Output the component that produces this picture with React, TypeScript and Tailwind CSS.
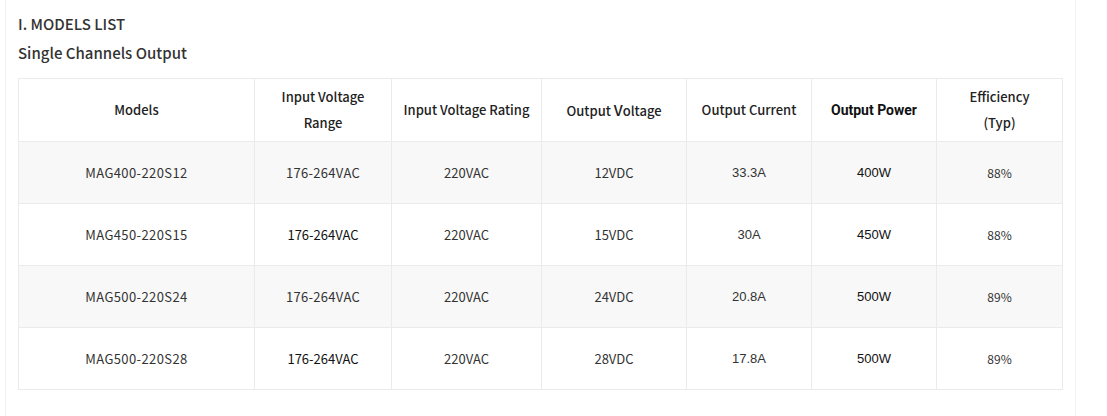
import React from "react";

const rows = [
  { m: "MAG400-220S12", r: "176-264VAC", rb: false, v: "12VDC", c: "33.3A", p: "400W", e: "88%" },
  { m: "MAG450-220S15", r: "176-264VAC", rb: true, v: "15VDC", c: "30A", p: "450W", e: "88%" },
  { m: "MAG500-220S24", r: "176-264VAC", rb: false, v: "24VDC", c: "20.8A", p: "500W", e: "89%" },
  { m: "MAG500-220S28", r: "176-264VAC", rb: true, v: "28VDC", c: "17.8A", p: "500W", e: "89%" },
];

export default function App() {
  const td = "border border-[#ebebeb] text-center align-middle h-[62px] p-0";
  const th = "border border-[#ebebeb] text-center align-middle h-[63px] p-0 font-medium text-[13px] leading-[26px] text-[#222]";
  return (
    <div className="w-[1107px] h-[416px] bg-white" style={{ fontFamily: '"Noto Sans CJK SC", "Noto Sans", sans-serif' }}>
      <div className="ml-[5px] w-[1071px] h-[416px] border-x border-[#f2f2f2] pl-[12px] pt-[11px]">
        <div className="text-[15px] leading-[26px] text-[#333] font-medium">I. MODELS LIST</div>
        <div className="text-[15px] leading-[26px] text-[#333] font-medium mt-[3px]">Single Channels Output</div>
        <table className="border-collapse mt-[12px] table-fixed w-[1045px]">
          <colgroup>
            <col className="w-[236px]" />
            <col className="w-[137px]" />
            <col className="w-[150px]" />
            <col className="w-[145px]" />
            <col className="w-[125px]" />
            <col className="w-[125px]" />
            <col className="w-[126px]" />
          </colgroup>
          <thead>
            <tr>
              <th className={th}>Models</th>
              <th className={th}>Input Voltage<br />Range</th>
              <th className={th}>Input Voltage Rating</th>
              <th className={th}>Output <span className="text-[15px]">V</span>oltage</th>
              <th className={th}>Output Current</th>
              <th className={th + " !font-bold !text-[14px] !text-[#111]"} style={{ fontFamily: '"Roboto", "Liberation Sans", sans-serif' }}>Output Power</th>
              <th className={th}>Efficiency<br />(Typ)</th>
            </tr>
          </thead>
          <tbody>
            {rows.map((r, i) => (
              <tr key={r.m} className={i % 2 === 0 ? "bg-[#f8f8f8]" : "bg-white"}>
                <td className={td + " text-[13px] tracking-[0.4px] text-[#333]"}>{r.m}</td>
                <td className={td + " text-[13px] " + (r.rb ? "text-[#111]" : "text-[#333] tracking-[0.3px]")}>{r.r}</td>
                <td className={td + " text-[13px] text-[#333]"}>220VAC</td>
                <td className={td + " text-[13px] text-[#333]"}>{r.v}</td>
                <td className={td + " text-[13px] text-[#333]"} style={{ fontFamily: '"Liberation Sans", Arial, sans-serif' }}>{r.c}</td>
                <td className={td + " text-[13px] text-[#111]"} style={{ fontFamily: '"Liberation Sans", Arial, sans-serif' }}>{r.p}</td>
                <td className={td + " text-[12px] text-[#333]"}>{r.e}</td>
              </tr>
            ))}
          </tbody>
        </table>
      </div>
    </div>
  );
}
